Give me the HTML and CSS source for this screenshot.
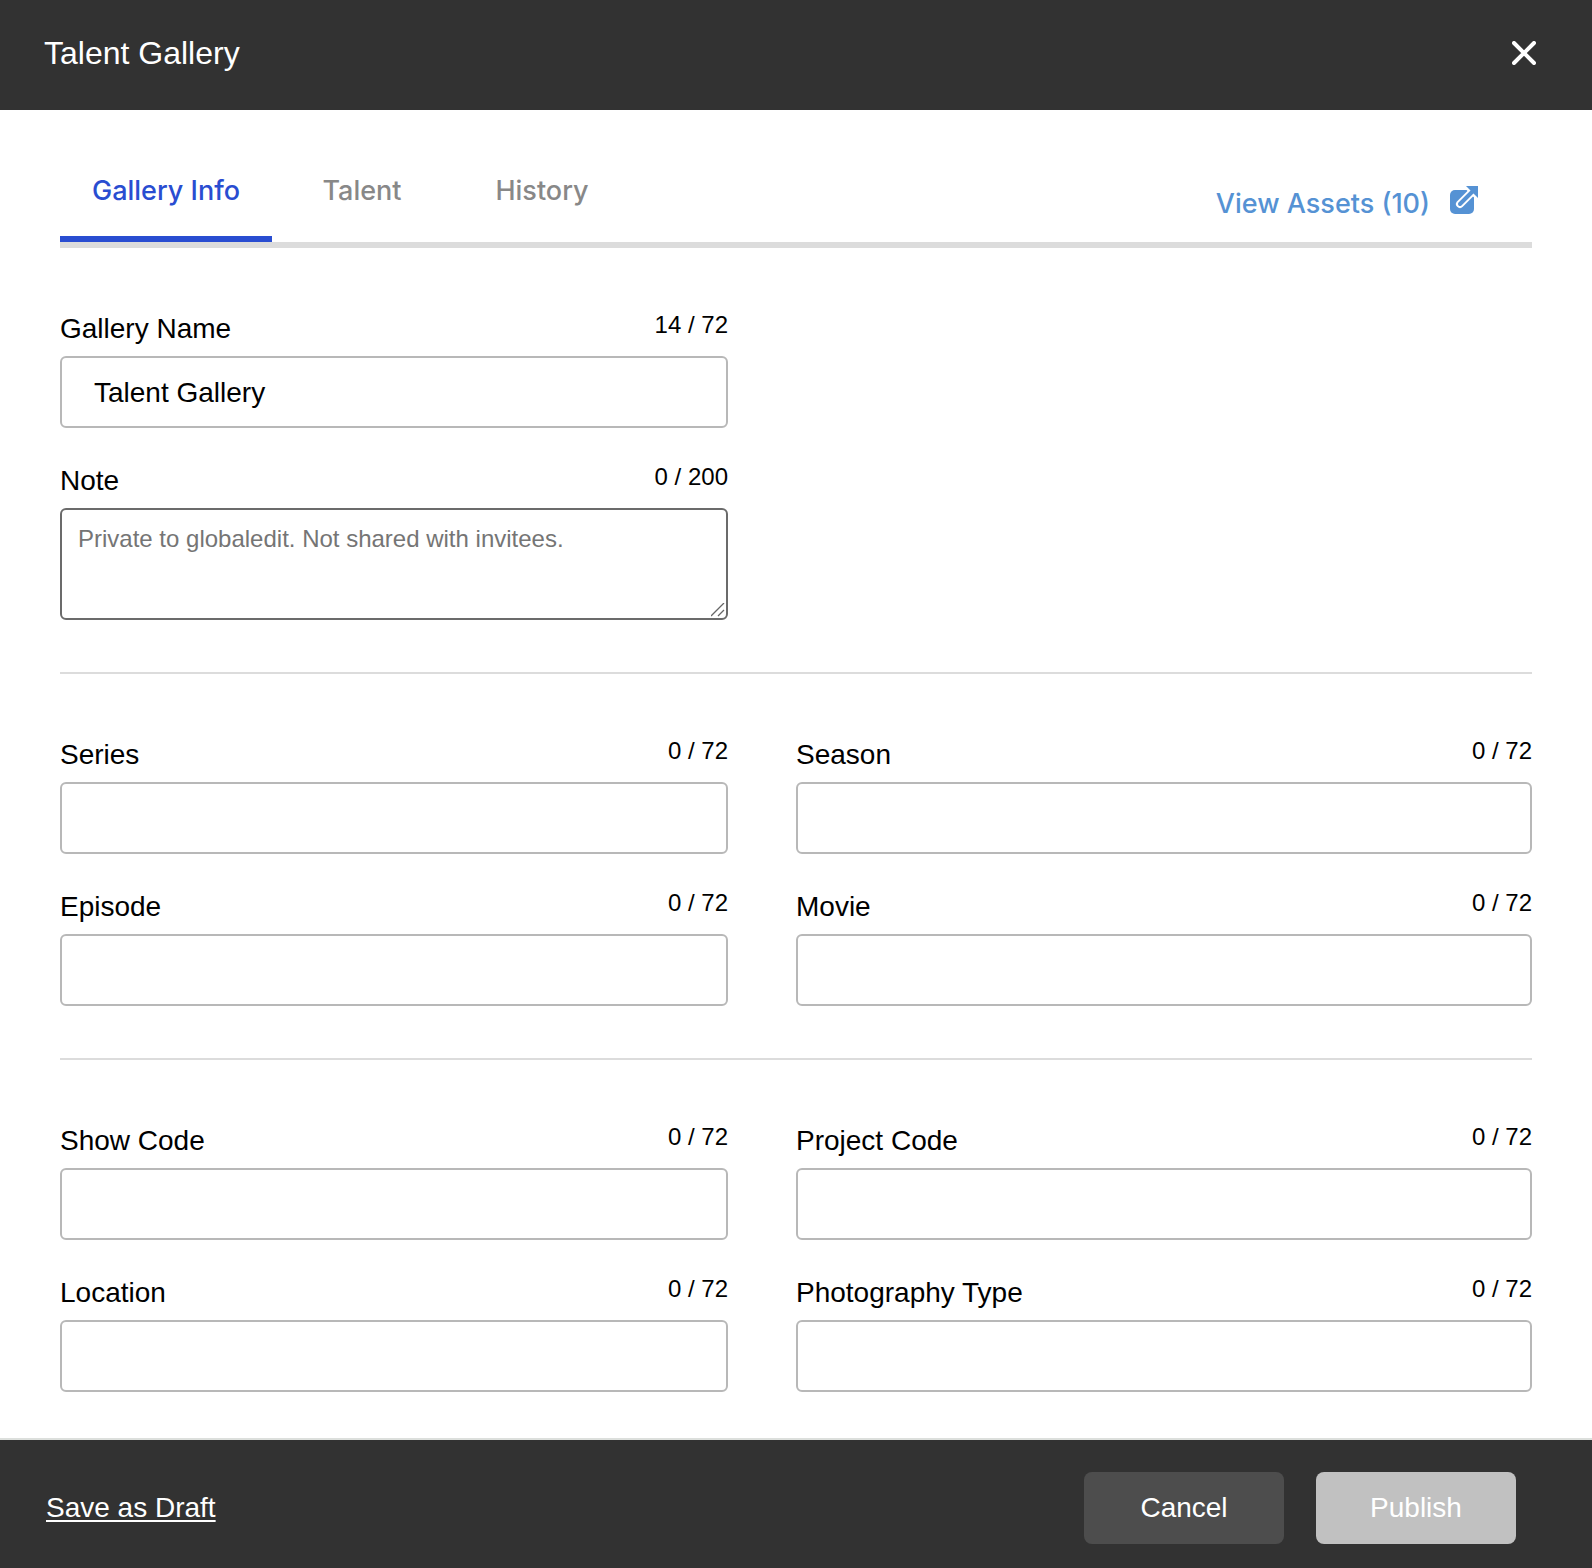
FILE: index.html
```html
<!DOCTYPE html>
<html lang="en">
<head>
    <meta charset="UTF-8">
    <meta name="viewport" content="width=device-width, initial-scale=1.0">
    <title>Talent Gallery</title>
    <link rel="stylesheet" href="styles.css">
</head>
<body>
    <header class="header">
        <h1>Talent Gallery</h1>
        <button class="close" type="button" aria-label="Close">
            <svg width="24" height="24" viewBox="0 0 24 24" fill="none" stroke="currentColor" stroke-width="4" stroke-linecap="round">
                <path d="M2 2l20 20M22 2L2 22"/>
            </svg>
        </button>
    </header>

    <main class="content">
        <!-- Tabs -->
        <nav class="tabs">
            <button class="tab active" type="button">Gallery Info</button>
            <button class="tab" type="button">Talent</button>
            <button class="tab" type="button">History</button>
            <a class="view-assets" href="#">
                View Assets (10)
                <svg width="28" height="28" viewBox="0 0 28 28">
                    <path fill="currentColor" d="M5 4h14l5 5v14a5 5 0 0 1-5 5H5a5 5 0 0 1-5-5V9a5 5 0 0 1 5-5z"/>
                    <path fill="none" stroke="#fff" stroke-width="8" stroke-linecap="round" d="M10 18L24 4"/>
                    <path fill="none" stroke="#fff" stroke-width="2" d="M14 0l14 14"/>
                    <path fill="none" stroke="currentColor" stroke-width="4" stroke-linecap="round" d="M10 18L23 5"/>
                    <path fill="currentColor" d="M16 0h12v12z"/>
                </svg>
            </a>
        </nav>

        <form id="galleryForm">
            <!-- Name and note -->
            <section class="fields">
                <div class="field">
                    <div class="field-top">
                        <label for="galleryName">Gallery Name</label>
                        <span class="count">14 / 72</span>
                    </div>
                    <input type="text" id="galleryName" maxlength="72" value="Talent Gallery">
                </div>
                <div class="field new-row">
                    <div class="field-top">
                        <label for="note">Note</label>
                        <span class="count">0 / 200</span>
                    </div>
                    <textarea id="note" maxlength="200" placeholder="Private to globaledit. Not shared with invitees."></textarea>
                </div>
            </section>

            <!-- Production -->
            <section class="fields">
                <div class="field">
                    <div class="field-top">
                        <label for="series">Series</label>
                        <span class="count">0 / 72</span>
                    </div>
                    <input type="text" id="series" maxlength="72">
                </div>
                <div class="field">
                    <div class="field-top">
                        <label for="season">Season</label>
                        <span class="count">0 / 72</span>
                    </div>
                    <input type="text" id="season" maxlength="72">
                </div>
                <div class="field">
                    <div class="field-top">
                        <label for="episode">Episode</label>
                        <span class="count">0 / 72</span>
                    </div>
                    <input type="text" id="episode" maxlength="72">
                </div>
                <div class="field">
                    <div class="field-top">
                        <label for="movie">Movie</label>
                        <span class="count">0 / 72</span>
                    </div>
                    <input type="text" id="movie" maxlength="72">
                </div>
            </section>

            <!-- Codes and location -->
            <section class="fields">
                <div class="field">
                    <div class="field-top">
                        <label for="showCode">Show Code</label>
                        <span class="count">0 / 72</span>
                    </div>
                    <input type="text" id="showCode" maxlength="72">
                </div>
                <div class="field">
                    <div class="field-top">
                        <label for="projectCode">Project Code</label>
                        <span class="count">0 / 72</span>
                    </div>
                    <input type="text" id="projectCode" maxlength="72">
                </div>
                <div class="field">
                    <div class="field-top">
                        <label for="location">Location</label>
                        <span class="count">0 / 72</span>
                    </div>
                    <input type="text" id="location" maxlength="72">
                </div>
                <div class="field">
                    <div class="field-top">
                        <label for="photographyType">Photography Type</label>
                        <span class="count">0 / 72</span>
                    </div>
                    <input type="text" id="photographyType" maxlength="72">
                </div>
            </section>
        </form>
    </main>

    <footer class="footer">
        <a class="save-draft" href="#">Save as Draft</a>
        <div class="footer-buttons">
            <button class="cancel" type="button">Cancel</button>
            <button class="publish" type="submit" form="galleryForm" disabled>Publish</button>
        </div>
    </footer>
</body>
</html>
```
FILE: styles.css
```css
* {
    box-sizing: border-box;
}
body {
    display: flex;
    flex-direction: column;
    min-height: 100vh;
    margin: 0;
    font-family: "Liberation Sans", Arial, Helvetica, sans-serif;
    font-size: 28px;
    color: #000;
    background: #fff;
}
button, input, textarea {
    font: inherit;
}

/* Header */
.header {
    display: flex;
    align-items: center;
    justify-content: space-between;
    height: 110px;
    padding: 0 56px 4px 44px;
    background: #323232;
    color: #fff;
}
.header h1 {
    margin: 0;
    font-size: 32px;
    font-weight: normal;
}
.close {
    display: flex;
    padding: 0;
    border: none;
    background: none;
    color: #fff;
    cursor: pointer;
}

/* Tabs */
.content {
    flex: 1;
    padding: 48px 60px 0;
}
.tabs {
    display: flex;
    height: 90px;
    border-bottom: 6px solid #dcdcdc;
    font-family: Inter, "Liberation Sans", Arial, sans-serif;
    font-size: 27px;
    font-weight: 500;
}
.tab {
    min-width: 180px;
    padding: 0 32px 14px;
    border: none;
    border-bottom: 6px solid transparent;
    background: none;
    color: #888;
    cursor: pointer;
}
.tab.active {
    border-bottom-color: #294dd1;
    color: #294dd1;
}
.view-assets {
    display: flex;
    align-items: flex-start;
    gap: 20px;
    margin-left: auto;
    padding: 28px 54px 0 0;
    line-height: 36px;
    color: #5592d4;
    text-decoration: none;
}

/* Form */
.fields {
    display: grid;
    grid-template-columns: 1fr 1fr;
    row-gap: 40px;
    padding: 68px 0 52px;
    border-bottom: 2px solid #dcdcdc;
}
.fields:last-child {
    padding-bottom: 40px;
    border-bottom: none;
}
.field:nth-child(odd), .new-row {
    grid-column: 1;
    padding-right: 68px;
}
.field-top {
    display: flex;
    justify-content: space-between;
    align-items: flex-start;
    height: 40px;
    line-height: 26px;
}
.count {
    font-size: 24px;
    line-height: 18px;
}
.field input, .field textarea {
    display: block;
    width: 100%;
    height: 72px;
    padding: 2px 32px 0;
    border: 2px solid #b8b8b8;
    border-radius: 6px;
    background: #fff;
    color: #000;
}
.field textarea {
    height: 112px;
    padding: 15px 16px;
    border-color: #6b6b6b;
    font-size: 24px;
    resize: vertical;
}
.field textarea::placeholder {
    color: #757575;
}
.field textarea::-webkit-resizer {
    background: url("data:image/svg+xml,%3Csvg xmlns='http://www.w3.org/2000/svg' viewBox='0 0 15 15'%3E%3Cpath d='M0 13L13 0M7 13L13 7' stroke='%23666' stroke-width='1.3'/%3E%3C/svg%3E");
}

/* Footer */
.footer {
    display: flex;
    align-items: center;
    justify-content: space-between;
    height: 130px;
    padding: 8px 76px 0 46px;
    border-top: 2px solid #dcdfdc;
    background: #323232;
}
.save-draft {
    color: #fff;
    text-decoration-thickness: 2px;
    text-underline-offset: 3px;
    text-decoration-skip-ink: none;
}
.footer-buttons {
    display: flex;
    gap: 32px;
}
.footer-buttons button {
    width: 200px;
    height: 72px;
    border: none;
    border-radius: 8px;
    color: #fff;
}
.cancel {
    background: #4d4d4d;
    cursor: pointer;
}
.publish {
    background: #c1c1c1;
}
```
